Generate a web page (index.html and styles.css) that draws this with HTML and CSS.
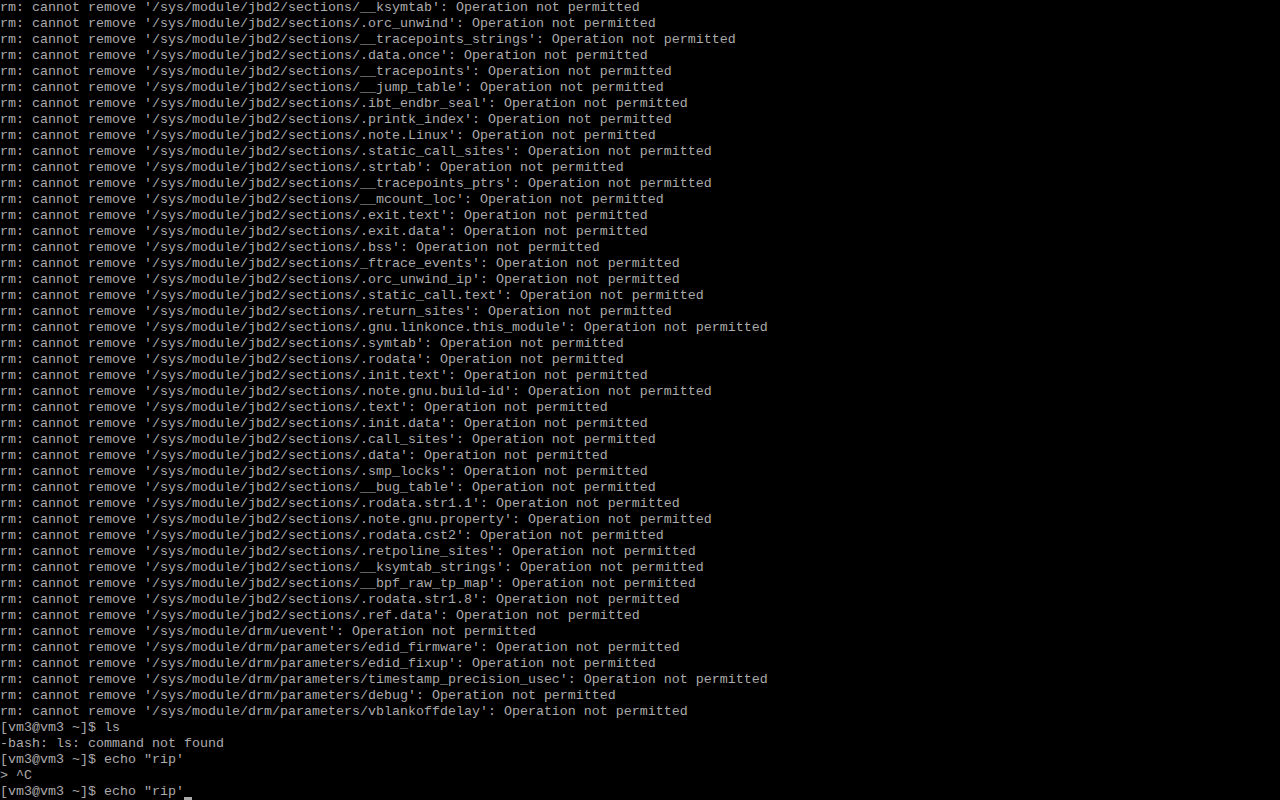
FILE: index.html
```html
<!DOCTYPE html>
<html lang="en">
<head>
    <meta charset="UTF-8">
    <title>tty1</title>
    <link rel="stylesheet" href="styles.css">
</head>
<body>
<pre class="console">rm: cannot remove '/sys/module/jbd2/sections/__ksymtab': Operation not permitted
rm: cannot remove '/sys/module/jbd2/sections/.orc_unwind': Operation not permitted
rm: cannot remove '/sys/module/jbd2/sections/__tracepoints_strings': Operation not permitted
rm: cannot remove '/sys/module/jbd2/sections/.data.once': Operation not permitted
rm: cannot remove '/sys/module/jbd2/sections/__tracepoints': Operation not permitted
rm: cannot remove '/sys/module/jbd2/sections/__jump_table': Operation not permitted
rm: cannot remove '/sys/module/jbd2/sections/.ibt_endbr_seal': Operation not permitted
rm: cannot remove '/sys/module/jbd2/sections/.printk_index': Operation not permitted
rm: cannot remove '/sys/module/jbd2/sections/.note.Linux': Operation not permitted
rm: cannot remove '/sys/module/jbd2/sections/.static_call_sites': Operation not permitted
rm: cannot remove '/sys/module/jbd2/sections/.strtab': Operation not permitted
rm: cannot remove '/sys/module/jbd2/sections/__tracepoints_ptrs': Operation not permitted
rm: cannot remove '/sys/module/jbd2/sections/__mcount_loc': Operation not permitted
rm: cannot remove '/sys/module/jbd2/sections/.exit.text': Operation not permitted
rm: cannot remove '/sys/module/jbd2/sections/.exit.data': Operation not permitted
rm: cannot remove '/sys/module/jbd2/sections/.bss': Operation not permitted
rm: cannot remove '/sys/module/jbd2/sections/_ftrace_events': Operation not permitted
rm: cannot remove '/sys/module/jbd2/sections/.orc_unwind_ip': Operation not permitted
rm: cannot remove '/sys/module/jbd2/sections/.static_call.text': Operation not permitted
rm: cannot remove '/sys/module/jbd2/sections/.return_sites': Operation not permitted
rm: cannot remove '/sys/module/jbd2/sections/.gnu.linkonce.this_module': Operation not permitted
rm: cannot remove '/sys/module/jbd2/sections/.symtab': Operation not permitted
rm: cannot remove '/sys/module/jbd2/sections/.rodata': Operation not permitted
rm: cannot remove '/sys/module/jbd2/sections/.init.text': Operation not permitted
rm: cannot remove '/sys/module/jbd2/sections/.note.gnu.build-id': Operation not permitted
rm: cannot remove '/sys/module/jbd2/sections/.text': Operation not permitted
rm: cannot remove '/sys/module/jbd2/sections/.init.data': Operation not permitted
rm: cannot remove '/sys/module/jbd2/sections/.call_sites': Operation not permitted
rm: cannot remove '/sys/module/jbd2/sections/.data': Operation not permitted
rm: cannot remove '/sys/module/jbd2/sections/.smp_locks': Operation not permitted
rm: cannot remove '/sys/module/jbd2/sections/__bug_table': Operation not permitted
rm: cannot remove '/sys/module/jbd2/sections/.rodata.str1.1': Operation not permitted
rm: cannot remove '/sys/module/jbd2/sections/.note.gnu.property': Operation not permitted
rm: cannot remove '/sys/module/jbd2/sections/.rodata.cst2': Operation not permitted
rm: cannot remove '/sys/module/jbd2/sections/.retpoline_sites': Operation not permitted
rm: cannot remove '/sys/module/jbd2/sections/__ksymtab_strings': Operation not permitted
rm: cannot remove '/sys/module/jbd2/sections/__bpf_raw_tp_map': Operation not permitted
rm: cannot remove '/sys/module/jbd2/sections/.rodata.str1.8': Operation not permitted
rm: cannot remove '/sys/module/jbd2/sections/.ref.data': Operation not permitted
rm: cannot remove '/sys/module/drm/uevent': Operation not permitted
rm: cannot remove '/sys/module/drm/parameters/edid_firmware': Operation not permitted
rm: cannot remove '/sys/module/drm/parameters/edid_fixup': Operation not permitted
rm: cannot remove '/sys/module/drm/parameters/timestamp_precision_usec': Operation not permitted
rm: cannot remove '/sys/module/drm/parameters/debug': Operation not permitted
rm: cannot remove '/sys/module/drm/parameters/vblankoffdelay': Operation not permitted
[vm3@vm3 ~]$ ls
-bash: ls: command not found
[vm3@vm3 ~]$ echo "rip'
&gt; ^C
[vm3@vm3 ~]$ echo "rip'<span class="cursor"></span></pre>
</body>
</html>
```

FILE: styles.css
```css
html, body {
    margin: 0;
    height: 100%;
    background: #000;
    overflow: hidden;
}

.console {
    margin: 0;
    color: #aaaaaa;
    font-family: "Liberation Mono", "DejaVu Sans Mono", monospace;
    font-size: 13.333px;
    line-height: 16px;
    white-space: pre;
}

/* blinking-style underline cursor of the text console */
.cursor {
    display: inline-block;
    width: 8px;
    height: 16px;
    vertical-align: top;
    box-sizing: border-box;
    border-bottom: 3px solid #aaaaaa;
}
```
